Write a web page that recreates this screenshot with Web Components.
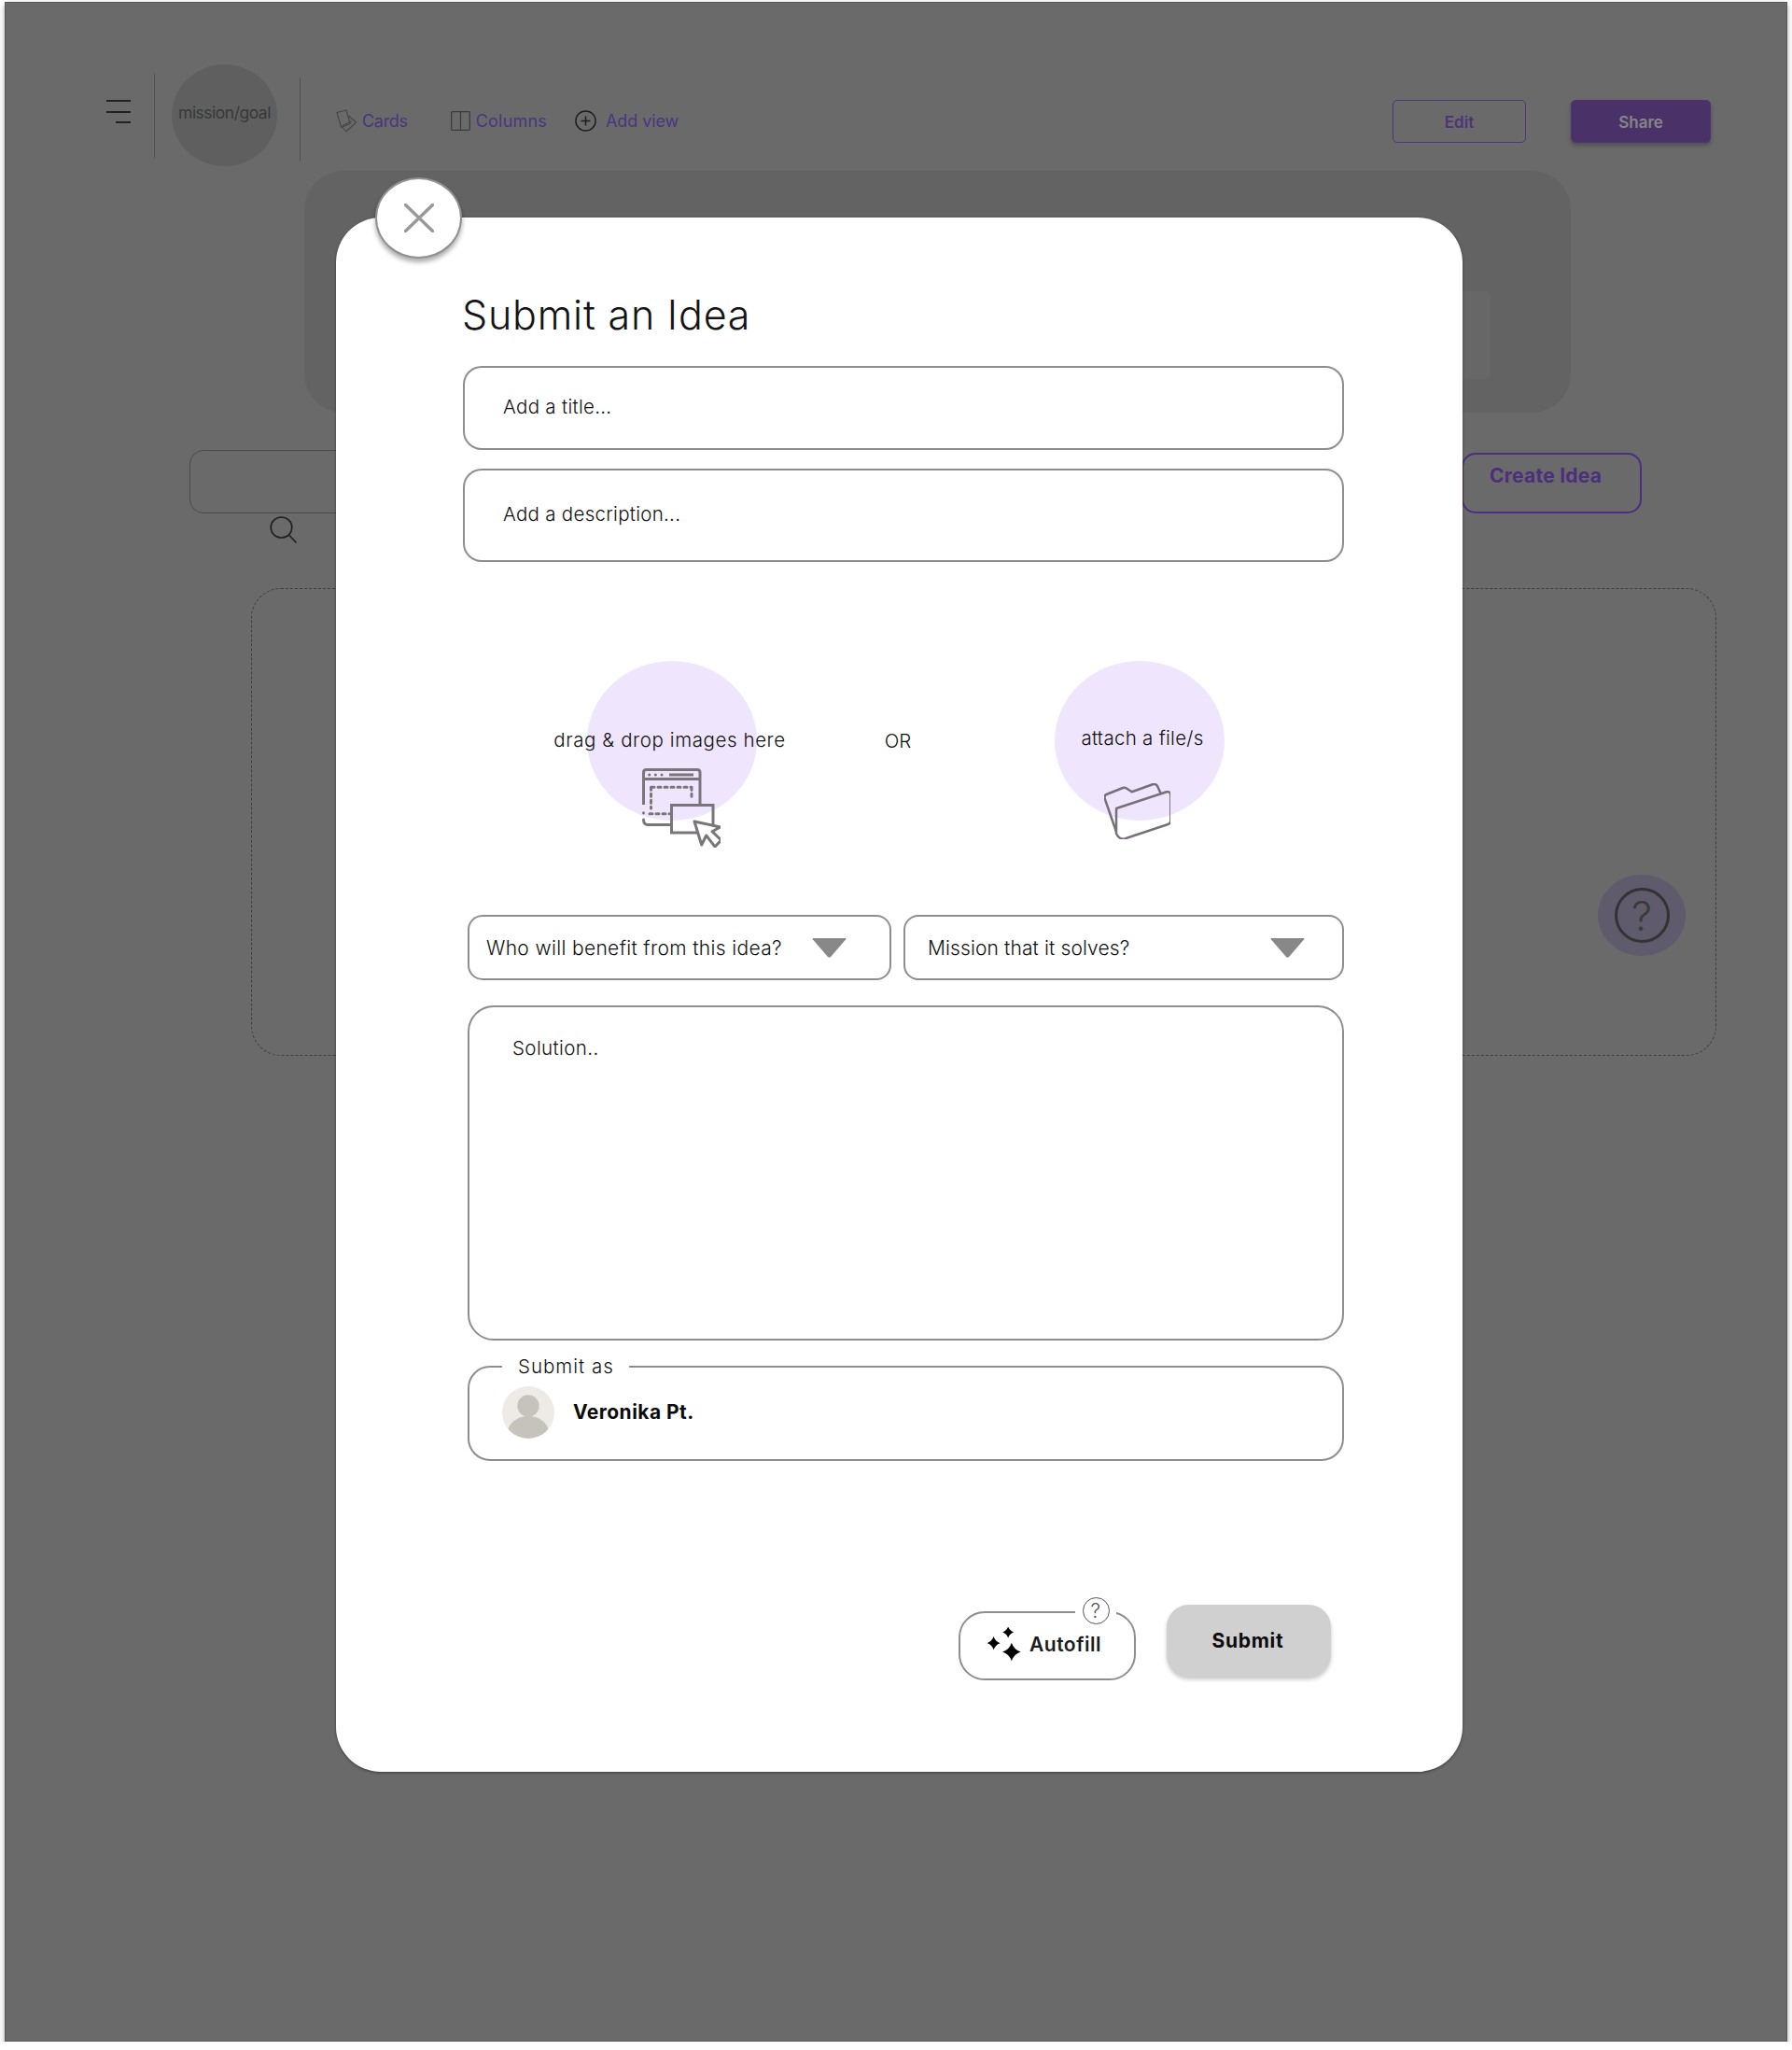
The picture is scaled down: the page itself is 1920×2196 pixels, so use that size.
<!DOCTYPE html>
<html lang="en">
<head>
<meta charset="utf-8">
<title>Submit an Idea</title>
<style>
  html, body { margin: 0; background: #fff; }
  body { font-family: Inter, "Liberation Sans", sans-serif; }
</style>
</head>
<body>
<app-shell>
  <top-bar></top-bar>
  <hero-panel></hero-panel>
  <search-row></search-row>
  <idea-area></idea-area>
  <idea-modal></idea-modal>
</app-shell>

<script>
class Base extends HTMLElement {
  connectedCallback() {
    if (!this.shadowRoot) {
      this.attachShadow({ mode: 'open' });
      this.shadowRoot.innerHTML = this.constructor.html;
    }
  }
}
function def(name, html) {
  customElements.define(name, class extends Base { static get html() { return html; } });
}

// -- background page --
def('app-shell', `
  <style>
    :host {
      display: block; position: relative; box-sizing: border-box;
      width: 1910px; height: 2185px; margin: 2px 0 0 5px;
      background: #6a6a6a;
      box-shadow: inset 0 0 0 1px #585858, 0 3px 6px rgba(0,0,0,.35);
      overflow: visible;
    }
  </style>
  <slot></slot>
`);

def('top-bar', `
  <style>
    :host { display: flex; align-items: flex-start; height: 109px; padding: 67px 82px 0 109px; }
    .burger { width: 26px; margin-top: 38px; display: flex; flex-direction: column; align-items: flex-end; gap: 9.5px; }
    .burger i { display: block; height: 2px; width: 100%; background: #222; }
    .burger i:last-child { width: 16px; }
    .div { width: 1px; background: #505050; height: 90px; }
    .goal {
      width: 113px; height: 109px; border-radius: 50%; background: #5f5f5f; margin-left: 18px;
      display: flex; align-items: center; justify-content: center;
      font-size: 17.5px; color: #383838; letter-spacing: -.5px; padding-bottom: 7px; box-sizing: border-box;
    }
    .nav { display: flex; align-items: center; height: 24px; margin-top: 48px; font-size: 18px; color: #4b3580; white-space: nowrap; }
    .nav svg { display: block; flex: none; }
    .edit, .share {
      box-sizing: border-box; height: 46px; width: 143px; border-radius: 5px; border: 1.5px solid #4e3478;
      display: flex; align-items: center; justify-content: center; margin-top: 38px;
      font-size: 17px; font-weight: 600; color: #4e3478; padding-top: 2px;
    }
    .share { width: 150px; background: #4a3269; color: #868686; margin-left: 48px; box-shadow: 0 3px 4px rgba(0,0,0,.25); }
  </style>
  <div class="burger"><i></i><i></i><i></i></div>
  <div class="div" style="margin:10px 0 0 25px"></div>
  <div class="goal">mission/goal</div>
  <div class="div" style="margin:14px 0 0 24px"></div>
  <div class="nav" style="margin-left:38px">
    <svg width="23" height="25" viewBox="20 16 23 25" fill="none" stroke="#454545" stroke-width="1.1" stroke-linejoin="round"><path d="M21 19.5 31 17l4.2 14.5-9.5 4z"/><path d="M33.5 23l8 7L31 40l-5.5-6"/><path d="M27 33.5l9.5-4.5"/></svg>
    <span style="margin-left:5px;letter-spacing:-.3px">Cards</span>
  </div>
  <div class="nav" style="margin-left:46px">
    <svg width="21" height="21" viewBox="0 0 21 21" fill="none" stroke="#3c3c3c" stroke-width="1.3"><rect x=".7" y=".7" width="19.6" height="19.6" rx=".8"/><path d="M10.5 .7v19.6"/></svg>
    <span style="margin-left:6px;letter-spacing:.2px">Columns</span>
  </div>
  <div class="nav" style="margin-left:30px">
    <svg width="23" height="23" viewBox="0 0 23 23" fill="none" stroke="#1e1e1e" stroke-width="1.5"><circle cx="11.5" cy="11.5" r="10.6"/><path d="M11.5 6.5v10M6.5 11.5h10"/></svg>
    <span style="margin-left:10px;letter-spacing:-.1px">Add view</span>
  </div>
  <div class="edit" style="margin-left:auto">Edit</div>
  <div class="share">Share</div>
`);

def('hero-panel', `
  <style>
    :host {
      display: flex; justify-content: flex-end; box-sizing: border-box;
      width: 1357px; height: 259px; margin: 5px 0 0 321px; padding: 129px 86px 0 0;
      background: #636363; border-radius: 42px;
    }
    .slot { width: 900px; height: 94px; background: #676767; border-radius: 6px; }
  </style>
  <div class="slot"></div>
`);

def('search-row', `
  <style>
    :host { display: flex; align-items: flex-start; margin-top: 40px; padding: 0 156px 0 198px; }
    .col { width: 800px; }
    .box { box-sizing: border-box; height: 68px; border: 1px solid #4a4a4a; border-radius: 15px; }
    .col svg { display: block; margin: 3px 0 0 86px; }
    .create {
      box-sizing: border-box; width: 193px; height: 65px; margin: 3px 0 0 auto; padding: 9px 0 0 28px;
      border: 2px solid #4b2f7e; border-radius: 15px;
      font-size: 21px; line-height: 28px; font-weight: 700; color: #4b2f7e; white-space: nowrap; letter-spacing: .25px;
    }
  </style>
  <div class="col">
    <div class="box"></div>
    <svg width="29" height="29" viewBox="0 0 29 29" fill="none" stroke="#222" stroke-width="1.7"><ellipse cx="12.5" cy="12" rx="11.3" ry="11"/><path d="M20.5 20l8 8.5"/></svg>
  </div>
  <div class="create">Create Idea</div>
`);

def('idea-area', `
  <style>
    :host {
      display: flex; justify-content: flex-end; align-items: flex-start; box-sizing: border-box;
      width: 1570px; height: 501px; margin: 48px 0 0 264px; padding: 306px 32px 0 0;
      border: 1px dashed #3e3e3e; border-radius: 32px;
    }
  </style>
  <help-fab></help-fab>
`);

def('help-fab', `
  <style>
    :host {
      display: flex; align-items: center; justify-content: center;
      width: 94px; height: 87px; border-radius: 50%; background: #5f5a6c;
    }
    .ring {
      box-sizing: border-box; width: 59px; height: 59px; border: 3px solid #333; border-radius: 50%;
      display: flex; align-items: center; justify-content: center;
      font-size: 44px; font-weight: 300; color: #3a3a3a; line-height: 1;
    }
  </style>
  <div class="ring">?</div>
`);

// -- modal parts --
def('text-box', `
  <style>
    :host {
      display: block; box-sizing: border-box; border: 2px solid #8e8e8e; border-radius: 20px;
      font-size: 20.5px; line-height: 26px; color: #111; font-weight: 300;
    }
  </style>
  <slot></slot>
`);

def('drop-target', `
  <style>
    :host { display: block; width: 182px; height: 200px; flex: none; }
    .disc { width: 182px; height: 171px; border-radius: 50%; background: #efe6fd; display: flex; flex-direction: column; align-items: center; }
    .text { flex: none; white-space: nowrap; font-size: 20.5px; line-height: 26px; color: #111; font-weight: 300; }
  </style>
  <div class="disc">
    <div class="text"><slot name="text"></slot></div>
    <slot></slot>
  </div>
`);

def('select-field', `
  <style>
    :host {
      display: flex; align-items: center; justify-content: space-between; box-sizing: border-box;
      height: 70px; border: 2px solid #8e8e8e; border-radius: 16px;
      font-size: 21px; color: #111; font-weight: 300; white-space: nowrap;
    }
    svg { display: block; flex: none; }
  </style>
  <slot></slot>
  <svg width="37" height="21" viewBox="0 0 37 21"><path d="M1.5 0h34q1.500 0 .7 1.300L20 20q-1.500 1.300-3 0L.8 1.300Q0 0 1.500 0z" fill="#888"/></svg>
`);

def('submit-as', `
  <style>
    :host { display: block; }
    fieldset {
      box-sizing: border-box; height: 114px; margin: 0; padding: 0 0 0 35px;
      border: 2px solid #8e8e8e; border-radius: 24px;
      display: flex; align-items: center; gap: 20px;
    }
    legend {
      margin-left: 0; padding: 0 16px 0 17px;
      font-size: 20.5px; line-height: 26px; color: #111; font-weight: 300; letter-spacing: 1px;
    }
    svg { display: block; flex: none; margin-top: -15px; }
    b { font-size: 21px; font-weight: 700; color: #0c0c0c; margin-top: -15px; letter-spacing: .45px; }
  </style>
  <fieldset>
    <legend>Submit as</legend>
    <svg width="56" height="56" viewBox="0 0 56 56"><defs><clipPath id="a"><circle cx="28" cy="28" r="28"/></clipPath></defs><circle cx="28" cy="28" r="28" fill="#eeebe6"/><g clip-path="url(#a)" fill="#c6c3bd"><circle cx="28" cy="21" r="11.700"/><ellipse cx="28" cy="50" rx="22" ry="18"/></g></svg>
    <b>Veronika Pt.</b>
  </fieldset>
`);

def('autofill-button', `
  <style>
    :host {
      display: flex; align-items: center; gap: 9px; position: relative; box-sizing: border-box;
      width: 190px; height: 74px; padding: 0 0 4px 29px; margin-top: 7px;
      border: 2px solid #8e8e8e; border-radius: 28px;
      font-size: 21px; font-weight: 600; color: #1c1c1c; letter-spacing: .5px;
    }
    svg { display: block; flex: none; }
    .hint {
      position: absolute; right: 19px; top: -19px; width: 44px; height: 32px; background: #fff;
      display: flex; align-items: center; justify-content: center;
    }
    .hint i {
      box-sizing: border-box; width: 29px; height: 29px; border: 1px solid #555; border-radius: 50%;
      display: flex; align-items: center; justify-content: center; font-style: normal;
      font-size: 21px; font-weight: 300; color: #555;
    }
  </style>
  <svg width="36" height="36" viewBox="19 45 33 33" fill="#000"><path d="M39.300 44.500Q40.700 48.600 44.800 50 40.700 51.400 39.300 55.500 37.900 51.400 33.800 50 37.900 48.600 39.300 44.500z"/><path d="M25 54.200Q26.600 59.100 31.500 60.700 26.600 62.300 25 67.200 23.400 62.300 18.500 60.700 23.400 59.100 25 54.200z"/><path d="M42.700 60.300Q44.900 67.100 51.700 69.300 44.900 71.500 42.700 78.300 40.500 71.500 33.700 69.300 40.500 67.100 42.700 60.300z"/></svg>
  <span>Autofill</span>
  <div class="hint"><i>?</i></div>
`);

def('submit-button', `
  <style>
    :host {
      display: flex; align-items: center; justify-content: center; box-sizing: border-box;
      width: 176px; height: 77px; padding: 0 2px 1px 0; border-radius: 24px; background: #d0d0d0;
      box-shadow: 0 3px 4px rgba(0,0,0,.22);
      font-size: 21px; font-weight: 700; color: #0c0c0c; letter-spacing: .7px;
    }
  </style>
  <slot></slot>
`);

def('close-button', `
  <style>
    :host {
      position: absolute; left: 42px; top: -43px; width: 93px; height: 87px; box-sizing: border-box;
      display: flex; align-items: center; justify-content: center;
      background: #fff; border: 2px solid #909090; border-radius: 50%;
      box-shadow: 0 4px 5px rgba(0,0,0,.32);
    }
    svg { display: block; margin-top: -1px; }
  </style>
  <svg width="32" height="31" viewBox="0 0 32 31" fill="none" stroke="#999" stroke-width="3.400" stroke-linecap="round"><path d="M1.500 1.500 30.500 29.500M30.500 1.500 1.500 29.500"/></svg>
`);

def('idea-modal', `
  <style>
    :host {
      display: block; position: absolute; left: 355px; top: 231px; box-sizing: border-box;
      width: 1207px; height: 1665px; padding: 74px 127px 0 136px;
      background: #fff; border-radius: 48px; box-shadow: 0 1px 3px rgba(0,0,0,.45);
    }
    h1 { margin: 0 0 0 -1px; font-size: 43px; line-height: 60px; font-weight: 300; color: #141414; letter-spacing: .8px; }
    .title { height: 90px; margin-top: 25px; padding: 29px 0 0 41px; letter-spacing: .3px; }
    .desc { height: 100px; margin-top: 20px; padding: 34px 0 0 41px; letter-spacing: .28px; }
    .drops { display: flex; width: 683px; margin: 106px 0 0 133px; }
    .or { flex: 1; padding: 73px 17px 0 0; text-align: center; font-size: 20.5px; line-height: 26px; color: #111; font-weight: 300; }
    .drops svg { display: block; flex: none; }
    .selects { display: flex; gap: 13px; margin: 72px 0 0 5px; }
    .selects select-field:first-child { width: 454px; padding: 0 46px 0 18px; letter-spacing: .35px; }
    .selects select-field:last-child { width: 472px; padding: 0 40px 0 24px; letter-spacing: .12px; }
    .solution { height: 359px; margin: 27px 0 0 5px; padding: 31px 0 0 46px; border-radius: 28px; letter-spacing: .4px; }
    submit-as { margin: 15px 0 0 5px; }
    .actions { display: flex; align-items: flex-start; justify-content: flex-end; gap: 33px; margin-top: 154px; padding-right: 14px; }
  </style>
  <close-button></close-button>
  <h1>Submit an Idea</h1>
  <text-box class="title">Add a title...</text-box>
  <text-box class="desc">Add a description...</text-box>
  <div class="drops">
    <drop-target>
      <span slot="text" style="display:block;margin:72px 5px 0 0;letter-spacing:.6px">drag &amp; drop images here</span>
      <svg width="84" height="85" viewBox="28 23 84 85" fill="none" stroke="#7a757b" stroke-width="3" style="margin:17px 0 0 20px">
        <path d="M29.500 62V27.500Q29.500 24.500 32.500 24.500H87Q90 24.500 90 27.500V62M29.500 34.500H90"/>
        <path d="M57 30H83" stroke-width="3"/>
        <path d="M35.700 30h.1M42.300 30h.1M49 30h.1" stroke-width="3" stroke-linecap="round"/>
        <path d="M38 43.300H81M37.500 43.300V66M81 43.300V57M36 71.700H59" stroke-dasharray="3 4" stroke-linecap="round"/>
        <path d="M29.500 70.800v.2M29.500 78Q29.500 83.500 34 83.500H59" stroke-linecap="round"/>
        <path d="M59.500 62.500H104V92H59.500z"/>
        <path d="M84 80 111.700 86 103 90.700 112.700 100 106 107 96.700 95 91.700 105z" fill="#fff" stroke-linejoin="round"/>
      </svg>
    </drop-target>
    <div class="or">OR</div>
    <drop-target>
      <span slot="text" style="display:block;margin:70px 0 0 6px;letter-spacing:.28px">attach a file/s</span>
      <svg width="71" height="60" viewBox="23 18 71 60" fill="none" stroke="#767078" stroke-width="2.500" stroke-linejoin="round" style="margin:35px 6px 0 0">
        <path d="M36 70 23.500 34Q23 31 25.500 30L43 23Q45.500 22.300 47 23.500L52.700 27.300 75 19.300Q78.500 18.500 80 21L83.500 28.500"/>
        <path d="M36 45 90 27.300Q94.300 26.500 94.300 31.500V58Q94.300 61.500 90 62.500L45 77.500Q39.300 78.500 36 72V47Q36 45.500 37 45z"/>
      </svg>
    </drop-target>
  </div>
  <div class="selects">
    <select-field>Who will benefit from this idea?</select-field>
    <select-field>Mission that it solves?</select-field>
  </div>
  <text-box class="solution">Solution..</text-box>
  <submit-as></submit-as>
  <div class="actions">
    <autofill-button></autofill-button>
    <submit-button>Submit</submit-button>
  </div>
`);
</script>
</body>
</html>
